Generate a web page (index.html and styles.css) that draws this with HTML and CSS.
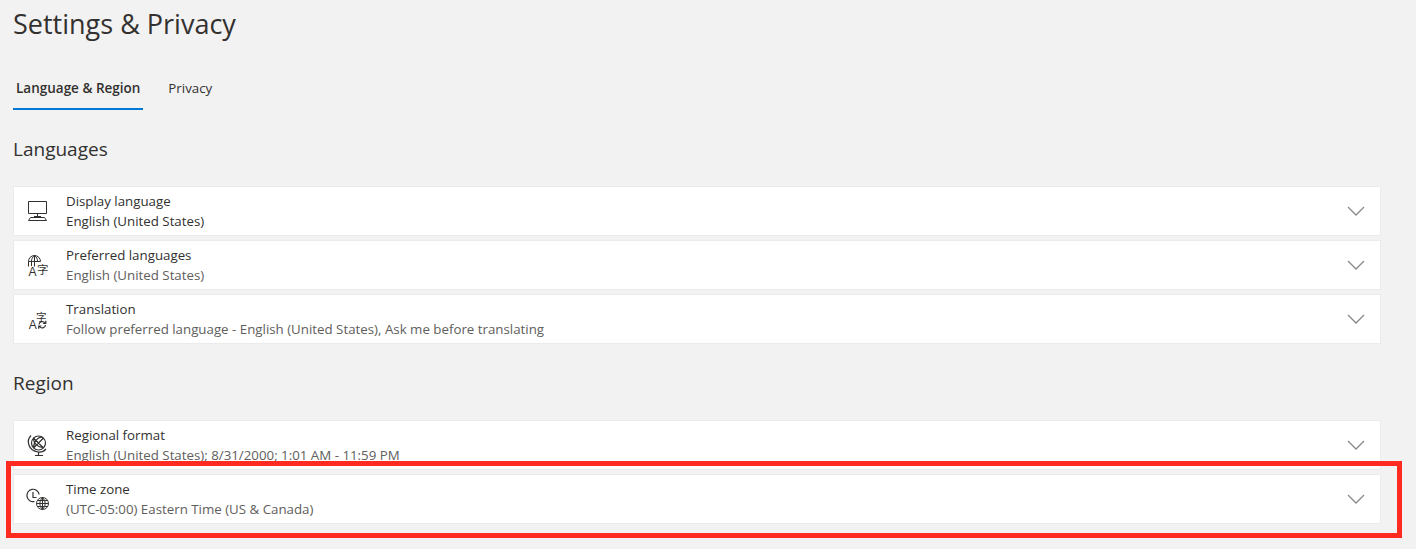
FILE: index.html
```html
<!DOCTYPE html>
<html>
  <head>
    <meta name="viewport" content="width=device-width, initial-scale=1">
    <title>Settings &amp; Privacy</title>
    <link rel="stylesheet" href="styles.css">
  </head>

  <body>
    <h1 class="title">Settings &amp; Privacy</h1>

    <div class="tabs">
      <a class="tab active">Language &amp; Region</a>
      <a class="tab">Privacy</a>
    </div>

    <h2 class="section">Languages</h2>

    <div class="rows">
      <div class="row">
        <svg class="icon" viewBox="0 0 24 24">
          <path d="M3.500 2.500h18v12h-18z M12.500 14.500v3 M9 17.500h7 M5.500 18.500h14 M5.500 18.500l-2 3h18l-2-3"/>
        </svg>
        <div class="text">
          <div class="label">Display language</div>
          <div class="value dark">English (United States)</div>
        </div>
        <svg class="chevron" viewBox="0 0 18 10"><path d="M1 1l8 8 8-8"/></svg>
      </div>

      <div class="row">
        <svg class="icon" viewBox="0 0 24 24">
          <path d="M3.500 13.500v-5a6 6 0 0 1 12 0 M3.500 8.500h12 M9.500 2.500v11 M6.500 13v-5c0-2 1-4 3-5.500 2 1.500 3 3.500 3 5.500"/>
          <text class="glyph" x="3.500" y="22.500">A</text>
          <text class="glyph cjk" x="12" y="20.500">字</text>
        </svg>
        <div class="text">
          <div class="label">Preferred languages</div>
          <div class="value">English (United States)</div>
        </div>
        <svg class="chevron" viewBox="0 0 18 10"><path d="M1 1l8 8 8-8"/></svg>
      </div>

      <div class="row">
        <svg class="icon" viewBox="0 0 24 24">
          <text class="glyph" x="3.800" y="21.500">A</text>
          <text class="glyph cjk small" x="11" y="14">字</text>
          <path class="thick" d="M14 17.500a3.300 3.300 0 0 1 6-1.500 M20.800 13.800v2.700h-2.700 M20.500 18a3.300 3.300 0 0 1-6 1.500 M13.700 21.700v-2.700h2.700"/>
        </svg>
        <div class="text">
          <div class="label">Translation</div>
          <div class="value">Follow preferred language - English (United States), Ask me before translating</div>
        </div>
        <svg class="chevron" viewBox="0 0 18 10"><path d="M1 1l8 8 8-8"/></svg>
      </div>
    </div>

    <h2 class="section">Region</h2>

    <div class="rows">
      <div class="row">
        <svg class="icon" viewBox="0 0 24 24">
          <circle class="thick" cx="13.500" cy="10" r="7"/>
          <path class="thick" d="M8.500 5l10 10 M18.500 5l-10 10 M9 4.500c-1.500 4 2.500 9.500 9.500 10 M18 4.500c-4-1.500-9 3-9.500 10"/>
          <path class="thick" d="M6 2.500c-5 5-3 15 7 16.500 3 .4 6-.6 8-3 M13.500 19v3.500 M10 22.500h8"/>
        </svg>
        <div class="text">
          <div class="label">Regional format</div>
          <div class="value">English (United States); 8/31/2000; 1:01 AM - 11:59 PM</div>
        </div>
        <svg class="chevron" viewBox="0 0 18 10"><path d="M1 1l8 8 8-8"/></svg>
      </div>

      <div class="row">
        <svg class="icon" viewBox="0 0 24 24">
          <path class="thick" d="M9.500 14.500a6.200 6.200 0 1 1 4.700-7 M8 5v5.500h3.500"/>
          <circle cx="17.500" cy="16.500" r="6"/>
          <path d="M11.500 16.500h12 M17.500 10.500v12 M12.500 13.500h10 M12.500 19.500h10 M17.500 10.500c-3.500 3.500-3.500 8.500 0 12 M17.500 10.500c3.500 3.500 3.500 8.500 0 12"/>
        </svg>
        <div class="text">
          <div class="label">Time zone</div>
          <div class="value">(UTC-05:00) Eastern Time (US &amp; Canada)</div>
        </div>
        <svg class="chevron" viewBox="0 0 18 10"><path d="M1 1l8 8 8-8"/></svg>
      </div>
    </div>

    <div class="highlight"></div>
  </body>
</html>
```

FILE: styles.css
```css
html, body {
  height: 100%;
}

body {
  margin: 0;
  padding: 0 35px 0 13px;
  background: #f2f2f2;
  color: #323130;
  font-family: "Open Sans", "Noto Sans", sans-serif;
  overflow: hidden;
  box-sizing: border-box;
  position: relative;
}

/* Page header */
.title {
  margin: 0;
  padding-top: 5px;
  font-size: 27px;
  line-height: 38px;
  font-weight: 400;
}

.tabs {
  display: flex;
  gap: 22px;
  margin-top: 28px;
}

.tab {
  padding: 0 3px;
  height: 39px;
  line-height: 34px;
  font-size: 13.300px;
  box-sizing: border-box;
}

.tab.active {
  font-weight: 600;
  font-size: 13.500px;
  border-bottom: 2px solid #0078d4;
}

/* Sections */
.section {
  margin: 0;
  padding: 26px 0 24px;
  font-size: 19px;
  line-height: 26px;
  font-weight: 400;
}

.rows {
  display: flex;
  flex-direction: column;
  gap: 4px;
}

.row {
  display: flex;
  align-items: center;
  height: 50px;
  background: #fff;
  border: 1px solid #ebebeb;
  box-sizing: border-box;
  padding: 0 15px 0 11px;
}

.icon {
  width: 24px;
  height: 24px;
  margin-right: 17px;
  flex: none;
  fill: none;
  stroke: #323130;
  stroke-width: 1;
  overflow: visible;
}

.icon .thick {
  stroke-width: 1.200;
}

.glyph {
  font-family: "Liberation Sans", sans-serif;
  font-size: 12px;
  fill: #323130;
  stroke: none;
}

.glyph.cjk {
  font-family: "Noto Sans CJK SC", sans-serif;
  font-size: 11.500px;
}

.glyph.cjk.small {
  font-size: 10.500px;
}

.text {
  flex: 1;
  font-size: 13.300px;
  line-height: 20px;
}

.value {
  color: #605e5c;
}

.value.dark {
  color: #323130;
}

.chevron {
  width: 18px;
  height: 10px;
  flex: none;
  fill: none;
  stroke: #8a8886;
  stroke-width: 1.300;
}

/* Red annotation box over the last row */
.highlight {
  position: absolute;
  left: 6px;
  top: 461px;
  width: 1396px;
  height: 77px;
  border: 5px solid #ff2a20;
  box-sizing: border-box;
}
```
